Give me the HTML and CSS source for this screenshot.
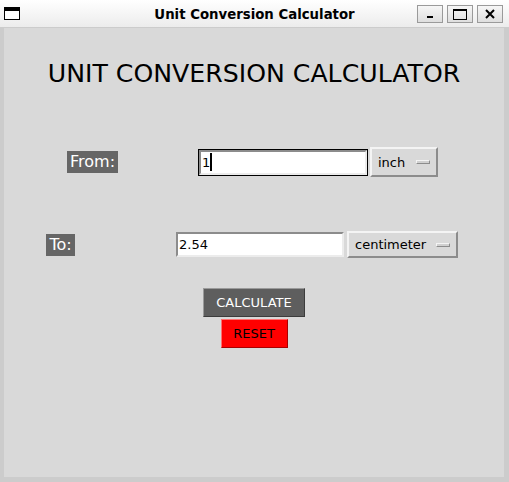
FILE: index.html
```html
<!DOCTYPE html>
<html>
<head>
<meta charset="utf-8">
<link rel="stylesheet" href="styles.css">
</head>
<body>
<div class="window">
  <div class="titlebar">
    <div class="app-icon"></div>
    <div class="title">Unit Conversion Calculator</div>
    <div class="wm-buttons">
      <div class="wm-btn"><svg width="10" height="10" viewBox="0 0 10 10"><rect x="2" y="7" width="6" height="2" fill="#000"/></svg></div>
      <div class="wm-btn"><svg width="14" height="11" viewBox="0 0 14 11"><rect x="0.5" y="0.5" width="13" height="10" fill="none" stroke="#000"/><rect x="0" y="0" width="14" height="2" fill="#000"/></svg></div>
      <div class="wm-btn"><svg width="10" height="10" viewBox="0 0 10 10"><path d="M1 1 L9 9 M9 1 L1 9" stroke="#000" stroke-width="2"/></svg></div>
    </div>
  </div>
  <div class="client">
    <h1 class="heading">UNIT CONVERSION CALCULATOR</h1>
    <div class="row row-from">
      <span class="label label-from">From:</span>
      <div class="entry entry-focus"><div class="field"><span>1</span><span class="caret"></span></div></div>
      <div class="option opt-inch"><span>inch</span><span class="indicator"></span></div>
    </div>
    <div class="row row-to">
      <span class="label label-to">To:</span>
      <div class="entry"><div class="field"><span>2.54</span></div></div>
      <div class="option opt-cm"><span>centimeter</span><span class="indicator"></span></div>
    </div>
    <div class="actions">
      <button class="btn btn-calc">CALCULATE</button>
      <button class="btn btn-reset">RESET</button>
    </div>
  </div>
</div>
</body>
</html>
```
FILE: styles.css
```css
html, body {
  margin: 0;
  padding: 0;
}
body {
  font-family: "DejaVu Sans", sans-serif;
}
.window {
  width: 509px;
  height: 482px;
  background: #cccccc;
  display: flex;
  flex-direction: column;
}
.titlebar {
  height: 27px;
  flex: none;
  background: linear-gradient(#ffffff, #ececec);
  display: grid;
  grid-template-columns: 1fr auto 1fr;
  align-items: center;
}
.app-icon {
  justify-self: start;
  align-self: start;
  margin: 7px 0 0 4px;
  width: 16px;
  height: 13px;
  box-sizing: border-box;
  border: 1px solid #000;
  border-top-width: 4px;
  background: #fff;
}
.title {
  font-weight: bold;
  font-size: 13.3px;
  color: #000;
  padding-top: 1px;
}
.wm-buttons {
  justify-self: end;
  display: flex;
  gap: 4px;
  margin-right: 6px;
  padding-top: 1px;
}
.wm-btn {
  width: 26px;
  height: 18px;
  box-sizing: border-box;
  border: 1px solid #9a9a9a;
  background: linear-gradient(#f6f6f6, #dedede);
  display: flex;
  align-items: center;
  justify-content: center;
}
.client {
  flex: 1;
  margin: 1px 5px 5px 4px;
  background: #d9d9d9;
  padding-top: 32px;
}
.heading {
  margin: 0;
  font-size: 25.2px;
  font-weight: normal;
  line-height: 28px;
  text-align: center;
  color: #000;
}
.row {
  display: flex;
  align-items: center;
}
.row-from {
  margin-top: 59px;
  height: 30px;
  padding-left: 63px;
}
.row-to {
  margin-top: 54px;
  height: 27px;
  padding-left: 42px;
}
.label {
  background: #666666;
  color: #fff;
  font-size: 16px;
  line-height: 18px;
  padding: 2px 0;
  text-align: center;
}
.label-from {
  width: 51px;
  margin-right: 80px;
}
.label-to {
  width: 29px;
  margin-right: 100px;
}
.entry {
  width: 170px;
  height: 27px;
  box-sizing: border-box;
  border: 1px solid #d9d9d9;
}
.entry-focus {
  border-color: #000;
}
.field {
  height: 100%;
  box-sizing: border-box;
  border: 2px solid;
  border-color: #8c8c8c #ececec #ececec #8c8c8c;
  background: #fff;
  display: flex;
  align-items: center;
  padding-left: 1px;
  font-size: 13px;
  color: #000;
}
.caret {
  width: 2px;
  height: 18px;
  background: #000;
}
.option {
  margin-left: 2px;
  box-sizing: border-box;
  border: 2px solid;
  border-color: #f4f4f4 #8c8c8c #8c8c8c #f4f4f4;
  background: #d9d9d9;
  display: flex;
  align-items: center;
  justify-content: space-between;
  padding: 0 6px;
  font-size: 13px;
  color: #000;
}
.opt-inch {
  width: 68px;
  height: 30px;
}
.opt-cm {
  width: 111px;
  height: 27px;
}
.indicator {
  width: 14px;
  height: 4px;
  box-sizing: border-box;
  border: 1px solid;
  border-color: #f4f4f4 #8c8c8c #8c8c8c #f4f4f4;
  background: #d0d0d0;
}
.actions {
  margin-top: 30px;
  display: flex;
  flex-direction: column;
  align-items: center;
  gap: 2px;
}
.btn {
  font-family: "DejaVu Sans", sans-serif;
  font-size: 13px;
  height: 29px;
  padding: 0;
  box-sizing: border-box;
  border: 1px solid;
}
.btn-calc {
  width: 102px;
  background: #5e5e5e;
  color: #fff;
  border-color: #9a9a9a #3c3c3c #3c3c3c #9a9a9a;
}
.btn-reset {
  width: 67px;
  background: #ff0000;
  color: #000;
  border-color: #ff7070 #a80000 #a80000 #ff7070;
}
```
